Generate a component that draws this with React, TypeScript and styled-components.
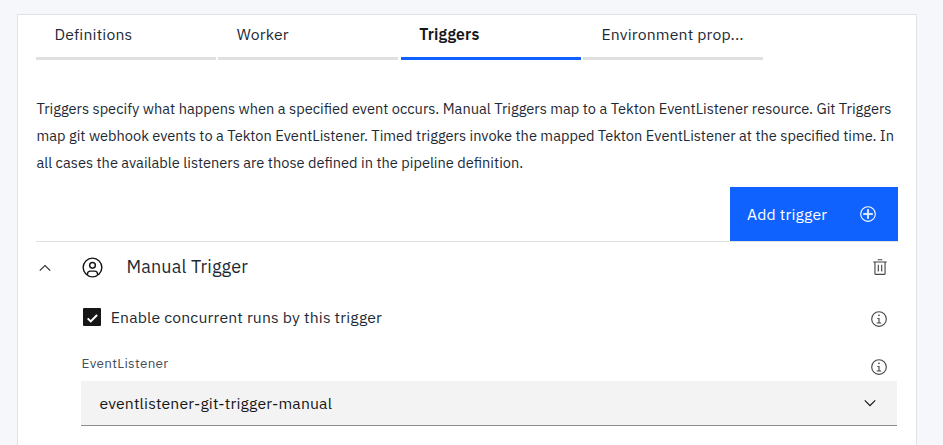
import React from "react";
import styled, { createGlobalStyle } from "styled-components";

const GlobalStyle = createGlobalStyle`
  *, *::before, *::after { box-sizing: border-box; }
  body {
    margin: 0;
    background: #f5f7fb;
    color: #1d2a35;
    font-family: "IBM Plex Sans", "Open Sans", sans-serif;
    font-size: 15.75px;
    letter-spacing: 0.17px;
  }
  button { font: inherit; color: inherit; letter-spacing: inherit; border: 0; padding: 0; background: none; }
`;

const Page = styled.div`
  display: flex;
  height: 445px;
  padding: 14px 26px 0 17px;
`;

const Card = styled.main`
  flex: 1;
  padding: 0 18px;
  background: #fff;
  border: 1px solid #dfe3e8;
  border-bottom: 0;
`;

const Tabs = styled.nav`
  display: flex;
  gap: 2.33px;
`;

const Tab = styled.button<{ $active?: boolean }>`
  width: 180px;
  height: 45px;
  padding: 0 16px 4px 18.5px;
  text-align: left;
  line-height: 32px;
  white-space: nowrap;
  font-weight: ${(p) => (p.$active ? 600 : 400)};
  color: ${(p) => (p.$active ? "#161616" : "#1d2a35")};
  border-bottom: 3px solid ${(p) => (p.$active ? "#0f62fe" : "#e0e0e0")};
`;

const Description = styled.p`
  margin: 35px -10px 0 0.5px;
  font-size: 14.625px;
  line-height: 27px;
  letter-spacing: 0;
  white-space: pre-line;
`;

const Actions = styled.div`
  display: flex;
  justify-content: flex-end;
  margin-top: 11px;
  border-bottom: 1px solid #dfe1e3;
`;

const AddButton = styled.button`
  display: flex;
  align-items: center;
  justify-content: space-between;
  width: 168px;
  height: 54px;
  padding: 0 21px 0 17px;
  background: #0f62fe;
  color: #fff;
`;

const TriggerHeader = styled.header`
  display: flex;
  align-items: center;
  height: 51px;
  padding-right: 9px;
`;

const Toggle = styled.button`
  display: flex;
  width: 45px;
  padding-top: 1px;
`;

const TriggerTitle = styled.h2`
  flex: 1;
  margin: 0 0 1px 22.5px;
  font-size: 18px;
  font-weight: 400;
  line-height: 26px;
  letter-spacing: 0.14px;
`;

const DeleteButton = styled.button`
  display: flex;
  padding-bottom: 2px;
`;

const TriggerBody = styled.section`
  padding: 13px 1px 0 45px;
`;

const OptionRow = styled.div`
  display: flex;
  align-items: center;
  justify-content: space-between;
  height: 22px;
  padding-right: 9px;
`;

const CheckLabel = styled.label`
  display: flex;
  align-items: center;
  gap: 9.75px;
  padding-left: 2px;
  line-height: 22px;
`;

const CheckBox = styled.span`
  display: flex;
  width: 18px;
  height: 18px;
  border-radius: 1px;
  background: #161616;
`;

const FieldHeader = styled.div`
  display: flex;
  align-items: flex-start;
  justify-content: space-between;
  height: 27px;
  margin-top: 26px;
  padding: 0 9px 0 0.5px;
`;

const FieldLabel = styled.span`
  color: #45505a;
  font-size: 13.5px;
  line-height: 18px;
  letter-spacing: 0.32px;
`;

const InfoSlot = styled.span<{ $top: number }>`
  display: flex;
  padding-top: ${(p) => p.$top}px;
`;

const Select = styled.button`
  display: flex;
  align-items: center;
  justify-content: space-between;
  width: 100%;
  height: 45px;
  padding: 0 18px 0 18.5px;
  background: #f3f3f3;
  border-bottom: 1px solid #8d8d8d;
  color: #161616;
`;

const Icon = styled.svg<{ $size: number; $color?: string }>`
  display: block;
  flex: none;
  width: ${(p) => p.$size}px;
  height: ${(p) => p.$size}px;
  fill: ${(p) => p.$color ?? "currentColor"};
`;

const InfoIcon = () => (
  <Icon $size={18} $color="#454545" viewBox="0 0 32 32">
    <path d="M17 22V14H13V16h2v6H12v2h8V22zM16 8a1.5 1.5 0 101.5 1.5A1.5 1.5 0 0016 8z" />
    <path d="M16 30A14 14 0 1130 16 14 14 0 0116 30zM16 4A12 12 0 1028 16 12 12 0 0016 4z" />
  </Icon>
);

const tabs = [
  { label: "Definitions" },
  { label: "Worker" },
  { label: "Triggers", active: true },
  { label: "Environment prop..." },
];

const description = [
  "Triggers specify what happens when a specified event occurs. Manual Triggers map to a Tekton EventListener resource. Git Triggers",
  "map git webhook events to a Tekton EventListener. Timed triggers invoke the mapped Tekton EventListener at the specified time. In",
  "all cases the available listeners are those defined in the pipeline definition.",
].join("\n");

export default function App() {
  return (
    <Page>
      <GlobalStyle />
      <Card>
        <Tabs>
          {tabs.map((t) => (
            <Tab key={t.label} $active={t.active}>
              {t.label}
            </Tab>
          ))}
        </Tabs>
        <Description>{description}</Description>
        <Actions>
          <AddButton>
            Add trigger
            <Icon $size={18} viewBox="0 0 32 32">
              <path d="M16 4A12 12 0 114 16 12 12 0 0116 4m0-2A14 14 0 1030 16 14 14 0 0016 2z" />
              <path d="M24 15H17V8H15v7H8v2h7v7h2V17h7z" stroke="currentColor" strokeWidth="1.2" />
            </Icon>
          </AddButton>
        </Actions>
        <TriggerHeader>
          <Toggle aria-label="Collapse">
            <Icon $size={18} $color="#262626" viewBox="0 0 16 16">
              <path d="M8 5l5 5-.7.7L8 6.4l-4.3 4.3L3 10z" />
            </Icon>
          </Toggle>
          <Icon $size={23} $color="#161616" viewBox="0 0 32 32">
            <path d="M16 8a5 5 0 105 5A5 5 0 0016 8zm0 8a3 3 0 113-3A3 3 0 0116 16z" />
            <path d="M16 2A14 14 0 1030 16 14.016 14.016 0 0016 2zM10 26.377V25a3.003 3.003 0 013-3h6a3.003 3.003 0 013 3v1.377a11.9 11.9 0 01-12 0zm13.992-1.451A5.002 5.002 0 0019 20H13a5.002 5.002 0 00-4.992 4.926 12 12 0 1115.985 0z" />
          </Icon>
          <TriggerTitle>Manual Trigger</TriggerTitle>
          <DeleteButton aria-label="Delete">
            <Icon $size={18} $color="#454545" viewBox="0 0 32 32">
              <path d="M12 12H14V24H12zM18 12H20V24H18zM4 6V8H6V28a2 2 0 002 2H24a2 2 0 002-2V8h2V6zM8 28V8H24V28zM12 2H20V4H12z" />
            </Icon>
          </DeleteButton>
        </TriggerHeader>
        <TriggerBody>
          <OptionRow>
            <CheckLabel>
              <CheckBox role="checkbox" aria-checked="true">
                <Icon $size={18} $color="none" viewBox="0 0 18 18">
                  <path d="M4.7 10.4l3 3 6.4-6.4" stroke="#fff" strokeWidth="2" />
                </Icon>
              </CheckBox>
              Enable concurrent runs by this trigger
            </CheckLabel>
            <InfoSlot $top={3}>
              <InfoIcon />
            </InfoSlot>
          </OptionRow>
          <FieldHeader>
            <FieldLabel>EventListener</FieldLabel>
            <InfoSlot $top={4}>
              <InfoIcon />
            </InfoSlot>
          </FieldHeader>
          <Select>
            eventlistener-git-trigger-manual
            <Icon $size={18} $color="#161616" viewBox="0 0 16 16">
              <path d="M8 11L3 6l.7-.7L8 9.6l4.3-4.3.7.7z" />
            </Icon>
          </Select>
        </TriggerBody>
      </Card>
    </Page>
  );
}
